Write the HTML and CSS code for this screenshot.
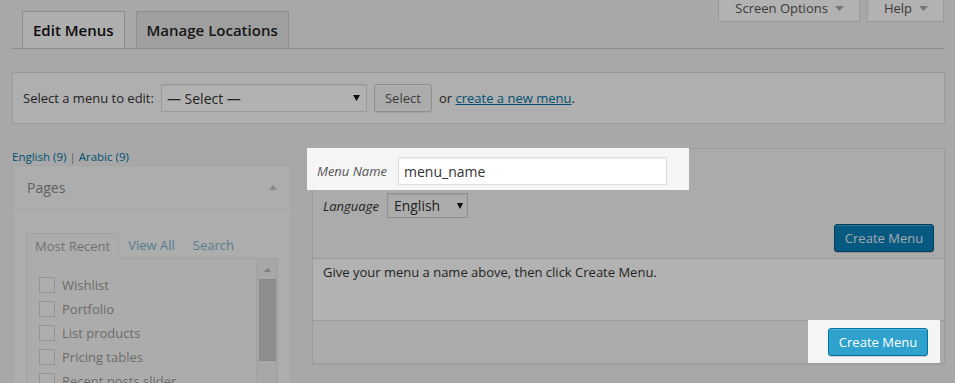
FILE: index.html
```html
<!DOCTYPE html>
<html>
<head>
<meta charset="utf-8">
<title>Menus</title>
<link rel="stylesheet" href="styles.css">
</head>
<body>
<div class="wrap">
  <div class="header">
    <div class="nav-tabs">
      <a class="nav-tab active">Edit Menus</a>
      <a class="nav-tab">Manage Locations</a>
    </div>
    <div class="meta-links">
      <div class="meta-btn">Screen Options <svg class="meta-arrow" width="9" height="5" viewBox="0 0 9 5"><polygon points="0,0 9,0 4.5,5"/></svg></div>
      <div class="meta-btn">Help <svg class="meta-arrow" width="9" height="5" viewBox="0 0 9 5"><polygon points="0,0 9,0 4.5,5"/></svg></div>
    </div>
  </div>

  <div class="manage-menus">
    <span class="manage-label">Select a menu to edit:</span>
    <div class="fake-select wide"><span>— Select —</span><svg class="sel-arrow" width="7" height="6" viewBox="0 0 7 6"><polygon points="0,0 7,0 3.5,6"/></svg></div>
    <button class="btn">Select</button>
    <span class="or">or <a class="link">create a new menu</a>.</span>
  </div>

  <div class="columns">
    <div class="left-col">
      <div class="langs"><a class="lang-link">English (9)</a> <span class="sep">|</span> <a class="lang-link">Arabic (9)</a></div>
      <div class="postbox">
        <div class="postbox-head">
          <span>Pages</span>
          <svg class="toggle" width="8" height="5" viewBox="0 0 8 5"><polygon points="0,5 8,5 4,0"/></svg>
        </div>
        <div class="postbox-inside">
          <div class="tabs">
            <span class="tab active">Most Recent</span>
            <span class="tab">View All</span>
            <span class="tab">Search</span>
          </div>
          <div class="tabs-panel">
            <div class="list">
              <div class="item"><span class="cb"></span>Wishlist</div>
              <div class="item"><span class="cb"></span>Portfolio</div>
              <div class="item"><span class="cb"></span>List products</div>
              <div class="item"><span class="cb"></span>Pricing tables</div>
              <div class="item"><span class="cb"></span>Recent posts slider</div>
              <div class="item"><span class="cb"></span>Blog</div>
            </div>
            <div class="scrollbar">
              <svg class="scroll-up" width="7" height="4" viewBox="0 0 7 4"><polygon points="0,4 7,4 3.5,0"/></svg>
              <div class="thumb"></div>
            </div>
          </div>
        </div>
      </div>
    </div>

    <div class="menu-edit">
      <div class="menu-head">
        <div class="name-row spot">
          <label class="name-label">Menu Name</label>
          <input class="name-input" type="text" value="menu_name">
        </div>
        <div class="lang-row">
          <span class="lang-label">Language</span>
          <div class="fake-select lang"><span>English</span><svg class="sel-arrow" width="6" height="6" viewBox="0 0 6 6"><polygon points="0,0 6,0 3,6"/></svg></div>
        </div>
        <div class="btn-row">
          <button class="btn-primary dark">Create Menu</button>
        </div>
      </div>
      <div class="menu-body">Give your menu a name above, then click Create Menu.</div>
      <div class="menu-foot">
        <div class="foot-spot spot">
          <button class="btn-primary">Create Menu</button>
        </div>
      </div>
    </div>
  </div>
</div>
<div class="overlay"></div>
</body>
</html>
```
FILE: styles.css
```css
html, body {
  margin: 0;
  height: 383px;
  overflow: hidden;
}
body {
  background: #f1f1f1;
  font-family: "Open Sans", "Noto Sans", sans-serif;
  font-size: 13px;
  color: #444;
}
.wrap {
  padding: 0 10px 0 12px;
}

/* header / tabs */
.header {
  display: flex;
  justify-content: space-between;
  align-items: flex-start;
  height: 48px;
  border-bottom: 1px solid #ccc;
}
.nav-tabs {
  display: flex;
  gap: 11px;
  padding: 11px 0 0 10px;
}
.nav-tab {
  box-sizing: border-box;
  height: 37px;
  line-height: 36px;
  padding: 0 10px;
  border: 1px solid #ccc;
  border-bottom: 0;
  background: #e4e4e4;
  color: #222;
  font-size: 15px;
  font-weight: 600;
}
.nav-tab.active {
  background: #f9f9f9;
  color: #111;
}
.meta-links {
  display: flex;
  gap: 7px;
  margin-right: 1px;
}
.meta-btn {
  box-sizing: border-box;
  height: 22px;
  display: flex;
  align-items: flex-start;
  gap: 7px;
  padding: 0 15px 0 16px;
  line-height: 16px;
  border: 1px solid #ddd;
  border-top: 0;
  background: #fff;
  color: #555;
  font-size: 13px;
}
.meta-arrow {
  margin-top: 6px;
  fill: #aaa;
}

/* select menu bar */
.manage-menus {
  margin-top: 23px;
  height: 28px;
  padding: 11px 10px;
  display: flex;
  align-items: center;
  gap: 7px;
  border: 1px solid #dfdfdf;
  background: #fbfbfb;
  color: #333;
}
.fake-select {
  box-sizing: border-box;
  display: flex;
  align-items: center;
  justify-content: space-between;
  border: 1px solid #ddd;
  background: #fff;
  color: #333;
  font-size: 14px;
  box-shadow: inset 0 1px 2px rgba(0,0,0,.07);
}
.fake-select.wide {
  width: 206px;
  height: 28px;
  padding: 0 6px 0 5px;
}
.sel-arrow {
  fill: #111;
}
.btn {
  box-sizing: border-box;
  height: 28px;
  width: 58px;
  padding: 0;
  border: 1px solid #ccc;
  border-radius: 3px;
  background: #f7f7f7;
  box-shadow: inset 0 1px 0 #fff, 0 1px 0 rgba(0,0,0,.08);
  color: #555;
  font-family: "Open Sans", "Noto Sans", sans-serif;
  font-size: 13px;
}
.link {
  color: #0074a2;
  text-decoration: underline;
}

/* columns */
.columns {
  display: flex;
  align-items: flex-start;
  gap: 20px;
  margin-top: 24px;
}
.left-col {
  width: 280px;
  flex: none;
}
.langs {
  font-size: 11.5px;
  line-height: 17px;
}
.lang-link {
  color: #0074a2;
}
.sep {
  color: #888;
}
.postbox {
  border: 1px solid #e5e5e5;
  background: #fff;
  opacity: .5;
}
.postbox-head {
  height: 42px;
  padding: 0 14px;
  display: flex;
  justify-content: space-between;
  align-items: center;
  border-bottom: 1px solid #eee;
  font-size: 14px;
  color: #222;
}
.toggle {
  fill: #999;
}
.postbox-inside {
  padding: 24px 13px 0;
}
.tabs {
  display: flex;
  height: 25px;
}
.tab {
  padding: 0 9px;
  line-height: 24px;
  color: #0074a2;
}
.tab.active {
  position: relative;
  z-index: 1;
  padding: 0 8px;
  margin-bottom: -1px;
  border: 1px solid #dfdfdf;
  border-bottom: 0;
  background: #fdfdfd;
  color: #555;
}
.tabs-panel {
  display: flex;
  height 160px;
  height: 160px;
  border: 1px solid #dfdfdf;
  background: #fdfdfd;
}
.list {
  flex: 1;
  padding: 14px 12px 0;
}
.item {
  display: flex;
  align-items: center;
  gap: 7px;
  height: 24px;
  color: #444;
}
.cb {
  box-sizing: border-box;
  width: 16px;
  height: 16px;
  border: 1px solid #b4b9be;
  background: #fff;
}
.scrollbar {
  width: 20px;
  border-left: 1px solid #e3e3e3;
  background: #efefef;
  display: flex;
  flex-direction: column;
  align-items: center;
}
.scroll-up {
  margin-top: 9px;
  fill: #777;
}
.thumb {
  box-sizing: border-box;
  margin-top: 7px;
  width: 17px;
  height: 82px;
  background: #a6a6a6;
  border: 1px solid #999;
}

/* menu edit panel */
.menu-edit {
  flex: 1;
  border: 1px solid #dfdfdf;
  box-shadow: 0 1px 1px rgba(0,0,0,.04);
  color: #333;
}
.menu-head {
  display: flex;
  flex-direction: column;
  align-items: flex-start;
  padding-bottom: 6px;
  background: #f5f5f5;
  border-bottom: 1px solid #dfdfdf;
}
.spot {
  position: relative;
  z-index: 2;
}
.name-row {
  display: flex;
  align-items: center;
  margin: -1px 0 0 -6px;
  padding: 9px 22px 5px 10px;
  background: #f5f5f5;
}
.name-label {
  width: 81px;
  font-style: italic;
  color: #555;
  white-space: nowrap;
}
.name-input {
  box-sizing: border-box;
  width: 269px;
  height: 28px;
  margin: 0;
  padding: 0 5px;
  border: 1px solid #ddd;
  background: #fff;
  box-shadow: inset 0 1px 2px rgba(0,0,0,.07);
  font-family: "Open Sans", "Noto Sans", sans-serif;
  font-size: 14px;
  color: #333;
  outline: none;
}
.lang-row {
  display: flex;
  align-items: center;
  gap: 8px;
  margin-top: 3px;
  padding-left: 10px;
}
.lang-label {
  font-style: italic;
  color: #333;
}
.fake-select.lang {
  width: 81px;
  height: 25px;
  padding: 0 4px 0 6px;
  border-color: #ccc;
  background: #f7f7f7;
}
.btn-row {
  align-self: stretch;
  display: flex;
  justify-content: flex-end;
  margin-top: 6px;
  padding-right: 10px;
}
.btn-primary {
  box-sizing: border-box;
  width: 100px;
  height: 28px;
  padding: 0;
  border: 1px solid #0074a2;
  border-radius: 3px;
  background: #2ea2cc;
  box-shadow: inset 0 1px 0 rgba(120,200,230,.5), 0 1px 0 rgba(0,0,0,.15);
  color: #fff;
  font-family: "Open Sans", "Noto Sans", sans-serif;
  font-size: 13px;
}
.btn-primary.dark {
  background: #0a80b8;
  border-color: #005a82;
  color: #e8f2f8;
}
.menu-body {
  box-sizing: border-box;
  height: 62px;
  padding: 4px 10px;
  line-height: 18px;
  background: #fff;
  border-bottom: 1px solid #dfdfdf;
}
.menu-foot {
  display: flex;
  justify-content: flex-end;
  padding-right: 4px;
  background: #f5f5f5;
}
.foot-spot {
  margin-top: -1px;
  padding: 8px 12px 7px 20px;
  background: #f5f5f5;
}

.overlay {
  position: fixed;
  inset: 0;
  background: rgba(0,0,0,.3);
  z-index: 1;
  pointer-events: none;
}
```
